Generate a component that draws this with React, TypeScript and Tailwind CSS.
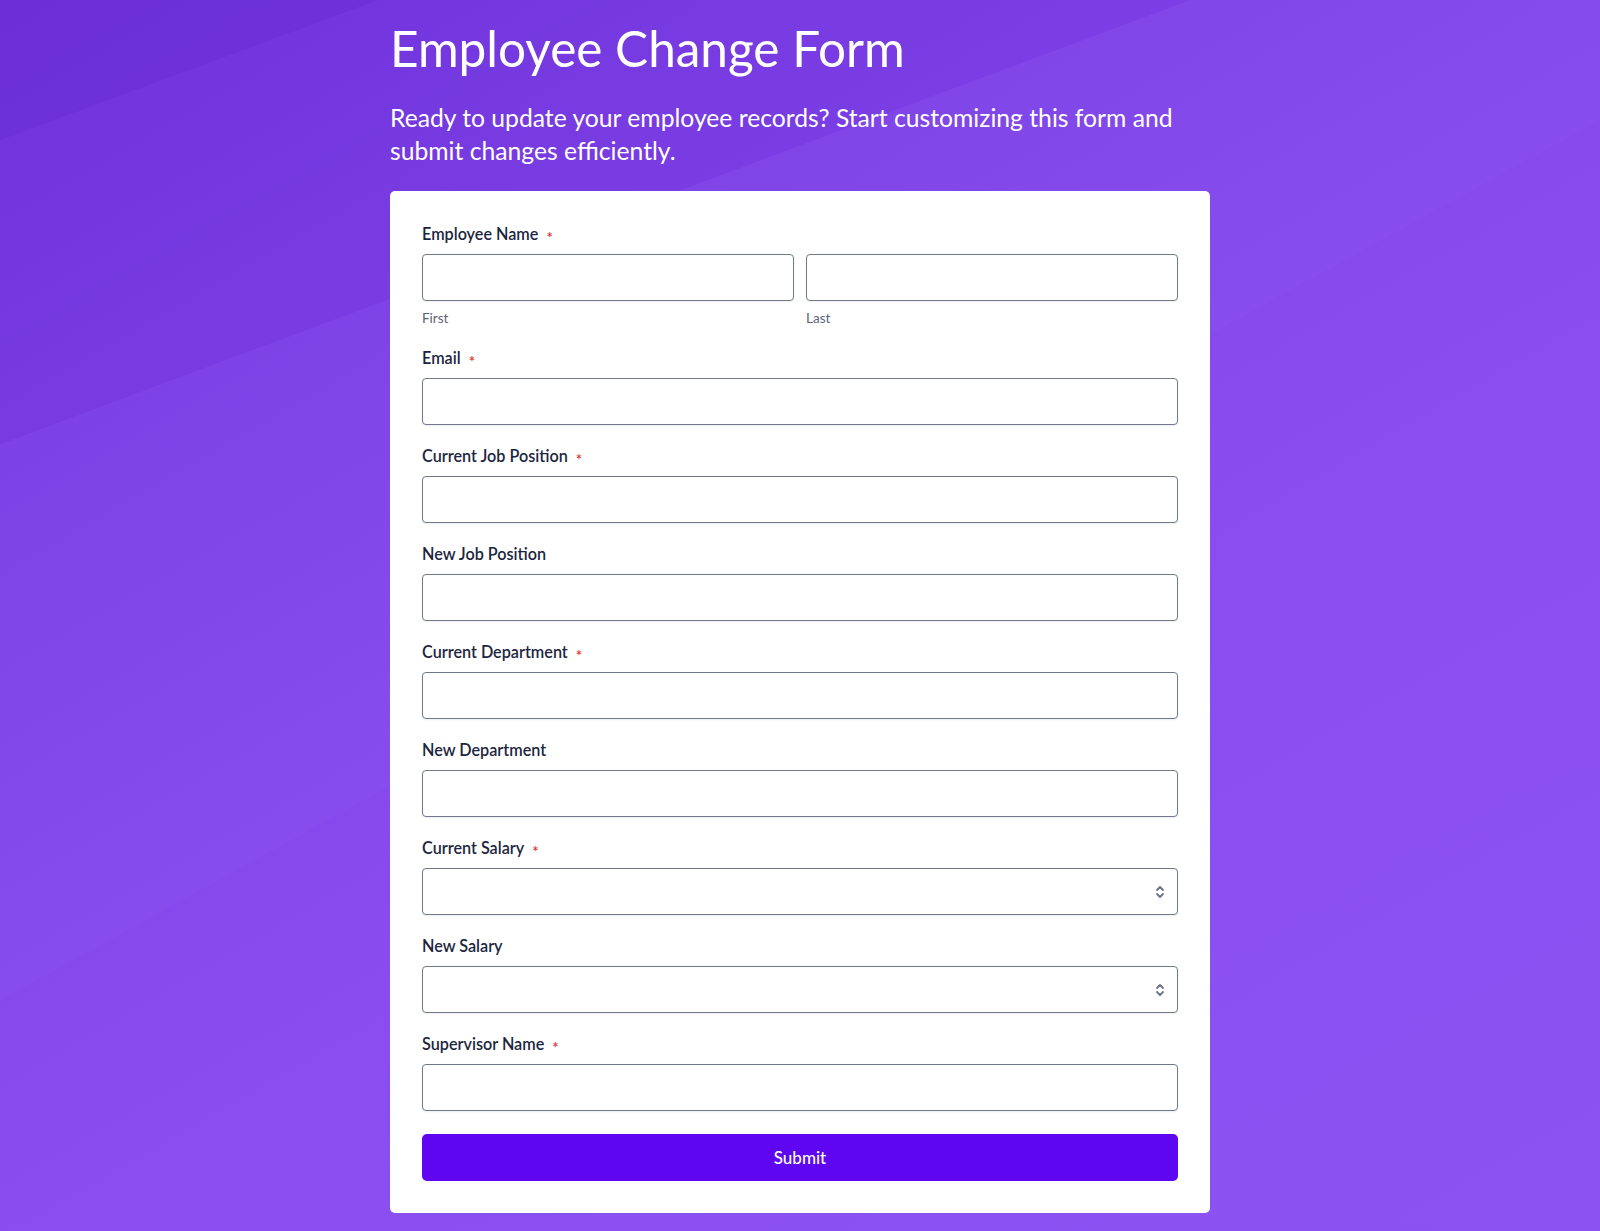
import React from "react";

const FONT = { fontFamily: "Lato, 'Open Sans', 'Liberation Sans', sans-serif" };

function Required() {
  return <span className="ml-[8px] text-[15px] leading-none font-semibold text-[#e0322b] relative top-[3px]">*</span>;
}

function Label({ text, required }: { text: string; required?: boolean }) {
  return (
    <div className="flex items-center h-[20px] text-[16.2px] leading-[20px] font-semibold text-[#1c2640] mb-[10px]">
      <span>{text}</span>
      {required && <Required />}
    </div>
  );
}

function TextBox({ spinner }: { spinner?: boolean }) {
  return (
    <div className="relative h-[47px] w-full rounded-[4px] border border-[#707889] bg-white shadow-[0_1px_2px_rgba(16,24,40,0.08)]">
      {spinner && (
        <svg
          className="absolute right-[12px] top-1/2 -translate-y-1/2"
          width="10"
          height="16"
          viewBox="0 0 10 16"
          fill="none"
          stroke="#6b7385"
          strokeWidth="1.8"
          strokeLinecap="round"
          strokeLinejoin="round"
        >
          <path d="M2 6 L5 3 L8 6" />
          <path d="M2 10 L5 13 L8 10" />
        </svg>
      )}
    </div>
  );
}

function Field({ label, required, spinner }: { label: string; required?: boolean; spinner?: boolean }) {
  return (
    <div>
      <Label text={label} required={required} />
      <TextBox spinner={spinner} />
    </div>
  );
}

export default function App() {
  return (
    <div style={FONT} className="relative min-h-[1231px] w-full overflow-hidden bg-[linear-gradient(150deg,#7236de_0%,#7f43e8_30%,#8a4ef0_60%,#8d53f2_100%)]">
      {/* diagonal light bands behind the page */}
      <svg className="pointer-events-none absolute inset-0 h-full w-full" viewBox="0 0 1600 1231" preserveAspectRatio="none">
        <polygon points="0,0 378,0 0,140" fill="#5a1cc4" opacity="0.28" />
        <polygon points="0,140 378,0 1190,0 0,444" fill="#6424cc" opacity="0.14" />
        <polygon points="0,444 1190,0 1600,0 1600,120 0,1000" fill="#ffffff" opacity="0.02" />
      </svg>

      <div className="relative mx-auto w-[820px] pt-[18px] pb-[19px]">
        <h1 className="text-[49.5px] leading-[60px] font-normal text-white">Employee Change Form</h1>
        <p className="mt-[23px] text-[24.7px] leading-[33px] font-normal text-white">
          Ready to update your employee records? Start customizing this form and submit changes efficiently.
        </p>

        <div className="mt-[24px] rounded-[5px] bg-white px-[32px] pt-[33px] pb-[32px]">
          {/* name row */}
          <div>
            <Label text="Employee Name" required />
            <div className="grid grid-cols-2 gap-[12px]">
              <div>
                <TextBox />
                <div className="mt-[9px] text-[13.5px] leading-[16px] text-[#5b6478]">First</div>
              </div>
              <div>
                <TextBox />
                <div className="mt-[9px] text-[13.5px] leading-[16px] text-[#5b6478]">Last</div>
              </div>
            </div>
          </div>

          <div className="mt-[22px] flex flex-col gap-[21px]">
            <Field label="Email" required />
            <Field label="Current Job Position" required />
            <Field label="New Job Position" />
            <Field label="Current Department" required />
            <Field label="New Department" />
            <Field label="Current Salary" required spinner />
            <Field label="New Salary" spinner />
            <Field label="Supervisor Name" required />
          </div>

          <button className="mt-[23px] flex h-[47px] w-full items-center justify-center rounded-[5px] bg-[#5e06ef] text-[17px] font-medium text-white">
            Submit
          </button>
        </div>
      </div>
    </div>
  );
}
